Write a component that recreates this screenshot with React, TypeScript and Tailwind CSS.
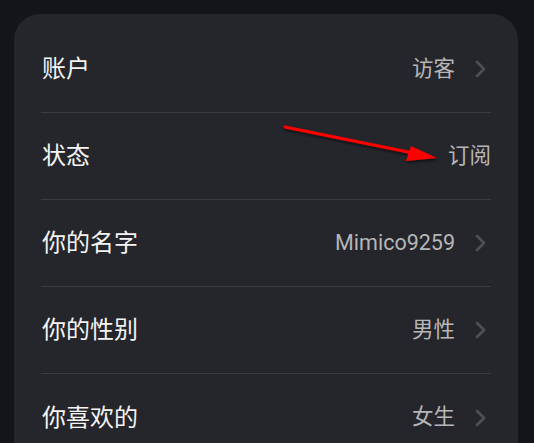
type Row = { label: string; value: string; chevron: boolean };

const rows: Row[] = [
  { label: '账户', value: '访客', chevron: true },
  { label: '状态', value: '订阅', chevron: false },
  { label: '你的名字', value: 'Mimico9259', chevron: true },
  { label: '你的性别', value: '男性', chevron: true },
  { label: '你喜欢的', value: '女生', chevron: true },
];

function Chevron() {
  return (
    <svg className="ml-[20px] mr-[5px]" width="11" height="18" viewBox="0 0 11 18" fill="none">
      <path d="M2 2 L9 9 L2 16" stroke="#4e4f54" strokeWidth="2.8" strokeLinecap="round" strokeLinejoin="round" />
    </svg>
  );
}

function SettingRow({ row, last }: { row: Row; last: boolean }) {
  return (
    <div className={`flex h-[87px] items-center justify-between ${last ? '' : 'border-b border-[#3a3b40]'}`}>
      <span className="text-[24px] text-[#f4f4f4] pl-px">{row.label}</span>
      <div className="flex items-center">
        <span className="text-[21.5px] text-[#b6b6b8]">{row.value}</span>
        {row.chevron && <Chevron />}
      </div>
    </div>
  );
}

export default function App() {
  return (
    <div
      className="relative h-[443px] w-[534px] overflow-hidden bg-[#14151b] pl-[14px] pr-[16px] pt-[14px]"
      style={{ fontFamily: 'Roboto, "Noto Sans CJK SC", sans-serif' }}
    >
      <div className="h-[460px] rounded-[26px] bg-[#25262b] px-[27px] pt-[12px]">
        {rows.map((row, i) => (
          <SettingRow key={row.label} row={row} last={i === rows.length - 1} />
        ))}
      </div>
      {/* red annotation arrow */}
      <svg className="absolute left-0 top-0" width="534" height="443" viewBox="0 0 534 443">
        <defs>
          <filter id="sh" x="-10%" y="-50%" width="120%" height="200%">
            <feDropShadow dx="1" dy="2" stdDeviation="1.5" floodColor="#000" floodOpacity="0.6" />
          </filter>
        </defs>
        <g filter="url(#sh)">
          <line x1="285" y1="127" x2="418" y2="154" stroke="#ff0000" strokeWidth="3" strokeLinecap="round" />
          <polygon points="437,158 411,146 406,161" fill="#ff0000" />
        </g>
      </svg>
    </div>
  );
}
